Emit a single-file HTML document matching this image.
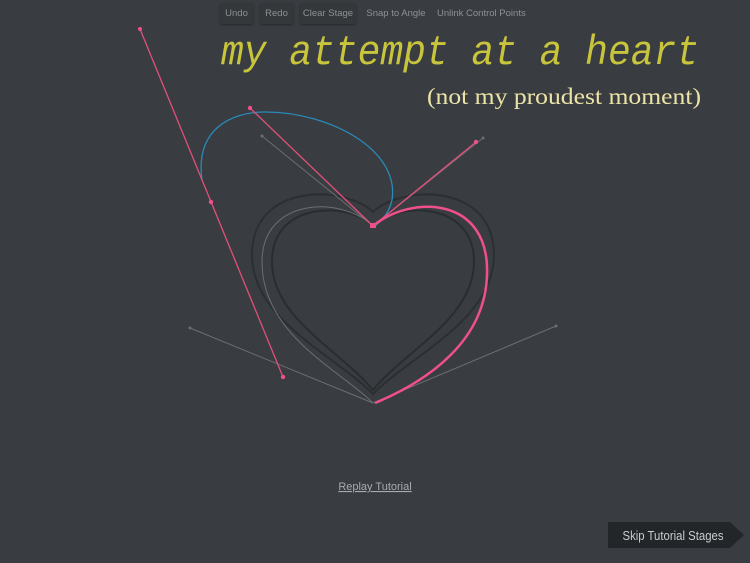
<!DOCTYPE html>
<html><head><style>
html,body{margin:0;padding:0;background:#393c40;width:750px;height:563px;overflow:hidden;font-family:"Liberation Sans",sans-serif}
.btn{position:absolute;top:3px;height:21px;line-height:21px;font-size:9.5px;color:#8d9094;text-align:center;border-radius:2px;white-space:nowrap}
.b{background:#35383b;box-shadow:0 1px 2px rgba(0,0,0,.35)}
</style></head><body>
<div class="btn b" style="left:220px;width:33px">Undo</div>
<div class="btn b" style="left:260px;width:33px">Redo</div>
<div class="btn b" style="left:300px;width:56px">Clear Stage</div>
<div class="btn" style="left:366px;width:60px">Snap to Angle</div>
<div class="btn" style="left:437px;width:86px">Unlink Control Points</div>
<svg width="750" height="563" style="position:absolute;left:0;top:0">
<text x="221" y="64" font-family="Liberation Mono,monospace" font-style="italic" font-size="42" fill="#c8c43c" textLength="478" lengthAdjust="spacingAndGlyphs">my attempt at a heart</text>
<text x="427" y="104" font-family="Liberation Serif,serif" font-size="23" fill="#ece4a6" textLength="274" lengthAdjust="spacingAndGlyphs">(not my proudest moment)</text>
<path d="M373,212 C345,185 252,182 252,255 C252,320 335,355 373,394 C411,355 494,320 494,255 C494,182 401,185 373,212Z" fill="none" stroke="#2c2f32" stroke-width="2"/>
<path d="M373,226 C350,202 272,200 272,262 C272,318 340,350 373,390 C406,350 474,318 474,262 C474,200 396,202 373,226Z" fill="none" stroke="#2a2d30" stroke-width="2"/>
<path d="M373,226 C340,195 262,198 262,262 C262,335 340,370 373,403" fill="none" stroke="#6b6e72" stroke-width="1"/>
<line x1="262" y1="136" x2="373" y2="226" stroke="#6b6e72"/>
<line x1="483" y1="138" x2="373" y2="226" stroke="#6b6e72"/>
<line x1="190" y1="328" x2="373" y2="403" stroke="#6b6e72"/>
<line x1="556" y1="326" x2="373" y2="403" stroke="#6b6e72"/>
<path d="M202,180 C195,130 230,112 265,112 C330,112 400,150 392,200 C390,210 385,218 375,226" fill="none" stroke="#2a8ab8" stroke-width="1.3"/>
<line x1="140" y1="29" x2="283" y2="377" stroke="#e0507a" stroke-width="1.3"/>
<line x1="250" y1="108" x2="373" y2="226" stroke="#e0507a" stroke-width="1.3"/>
<line x1="476" y1="142" x2="373" y2="226" stroke="#e0507a" stroke-width="1.3"/>
<path d="M373,226 C410,195 490,195 487,275 C485,340 430,380 375,403" fill="none" stroke="#f0508a" stroke-width="2.5"/>
<g fill="#f0508a"><circle cx="140" cy="29" r="2"/><circle cx="283" cy="377" r="2.2"/><circle cx="211" cy="202" r="2.2"/><circle cx="250" cy="108" r="2.2"/><circle cx="476" cy="142" r="2.2"/><rect x="370" y="223" width="6" height="5"/></g>
<g fill="#6b6e72"><circle cx="262" cy="136" r="1.5"/><circle cx="483" cy="138" r="1.5"/><circle cx="190" cy="328" r="1.5"/><circle cx="556" cy="326" r="1.5"/></g>
<text x="375" y="490" text-anchor="middle" font-size="11" fill="#a7aaae" text-decoration="underline">Replay Tutorial</text>
<path d="M608,522 L730,522 L744,535 L730,548 L608,548Z" fill="#232629"/>
<text x="673" y="540" text-anchor="middle" font-size="12.5" fill="#c9ccd0" textLength="101" lengthAdjust="spacingAndGlyphs">Skip Tutorial Stages</text>
</svg>
</body></html>
